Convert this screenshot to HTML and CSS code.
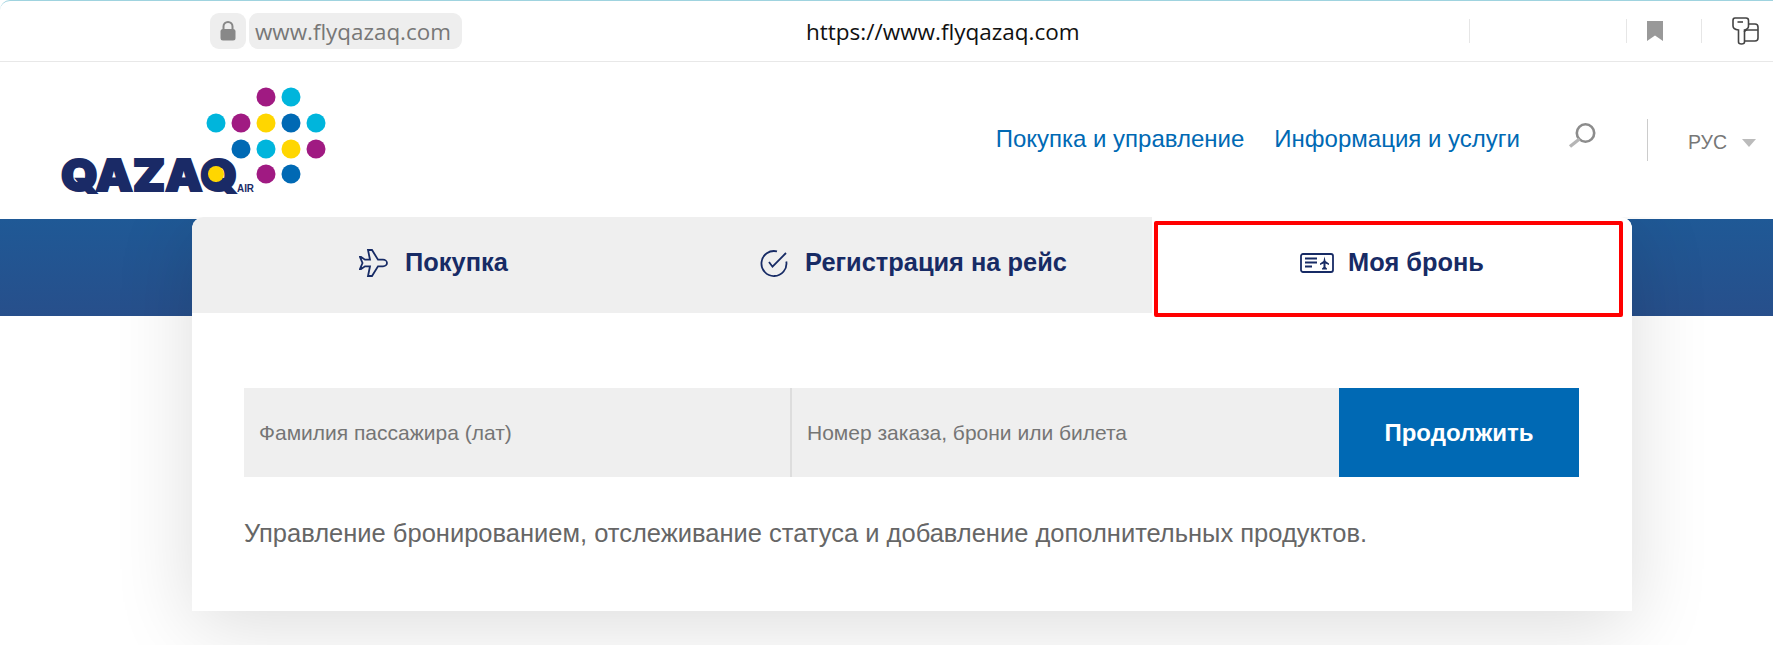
FILE: index.html
```html
<!DOCTYPE html>
<html lang="ru">
<head>
<meta charset="UTF-8">
<meta name="viewport" content="width=device-width, initial-scale=1.0">
<title>Qazaq Air</title>
<link rel="stylesheet" href="styles.css">
</head>
<body>
<div class="browser-bar">
  <div class="site-pill lock-pill">
    <svg class="lock-icon" width="16" height="20" viewBox="0 0 16 20">
      <path d="M3.5 9V5.5a4.5 4.5 0 0 1 9 0V9" fill="none" stroke="#888" stroke-width="2"/>
      <rect x="0.5" y="8" width="15" height="11.5" rx="2.5" fill="#888"/>
    </svg>
  </div>
  <div class="site-pill domain-pill">www.flyqazaq.com</div>
  <div class="address">https://www.flyqazaq.com</div>
  <div class="bar-tools">
    <span class="bar-sep bar-sep-first"></span>
    <span class="bar-sep"></span>
    <svg class="bookmark-icon" width="16" height="20" viewBox="0 0 16 20">
      <path d="M0 0H16V20L8 14.5L0 20Z" fill="#999"/>
    </svg>
    <span class="bar-sep"></span>
    <svg class="key-icon" width="27" height="28" viewBox="0 0 27 28" fill="none" stroke="#444" stroke-width="1.6">
      <path d="M3 1H14C15.5 1 16.5 2 16.5 3.5V9C16.5 11 15 12.5 12.5 13V25C12.5 26.5 11 27 9.5 27C7.5 27 6.5 26 6.5 25V13C3 12.5 1 11 1 9V3.5C1 2 1.8 1 3 1Z"/>
      <path d="M5.5 5H11"/>
      <path d="M16.5 7H23C25 7 26 8 26 10V21C26 23 25 24 23 24H12.5"/>
      <path d="M12.5 15C12.5 13.5 14 13 16 13H26"/>
    </svg>
  </div>
</div>

<header class="site-header">
  <svg class="logo" width="280" height="131" viewBox="0 0 280 131">
    <circle cx="216" cy="17" r="9.5" fill="#a01a82"/>
    <circle cx="241" cy="17" r="9.5" fill="#00b5dc"/>
    <circle cx="166" cy="43" r="9.5" fill="#00b5dc"/>
    <circle cx="191" cy="43" r="9.5" fill="#a01a82"/>
    <circle cx="216" cy="43" r="9.5" fill="#ffd600"/>
    <circle cx="241" cy="43" r="9.5" fill="#0069b4"/>
    <circle cx="266" cy="43" r="9.5" fill="#00b5dc"/>
    <circle cx="191" cy="69" r="9.5" fill="#0069b4"/>
    <circle cx="216" cy="69" r="9.5" fill="#00b5dc"/>
    <circle cx="241" cy="69" r="9.5" fill="#ffd600"/>
    <circle cx="266" cy="69" r="9.5" fill="#a01a82"/>
    <circle cx="216" cy="94" r="9.5" fill="#a01a82"/>
    <circle cx="241" cy="94" r="9.5" fill="#0069b4"/>
    <text class="logo-name" x="11" y="111" textLength="176" lengthAdjust="spacingAndGlyphs">QAZAQ</text>
    <circle cx="166" cy="94" r="8" fill="#ffd600"/>
    <text class="logo-air" x="187" y="112" textLength="17" lengthAdjust="spacingAndGlyphs">AIR</text>
  </svg>
  <nav class="main-nav">
    <a href="#">Покупка и управление</a>
    <a href="#">Информация и услуги</a>
  </nav>
  <svg class="search-icon" width="28" height="25" viewBox="0 0 28 25" fill="none" stroke="#8c8c8c">
    <circle cx="17.5" cy="10" r="8.7" stroke-width="2.6"/>
    <path d="M11.5 16L2 23.5" stroke-width="3.4" stroke="#b5b5b5"/>
  </svg>
  <span class="nav-sep"></span>
  <div class="lang">РУС<span class="lang-arrow"></span></div>
</header>

<main class="hero">
  <section class="card">
    <div class="tabs">
      <div class="tab">
        <svg width="29" height="28" viewBox="0 0 29 28" fill="none" stroke="#172b65" stroke-width="1.8">
          <path d="M28 14C28 12 26 10.7 24 10.7H19L13 1H9L11 10.7H6L2 8H1L3.5 14L1 20H2L6 17.3H11L9 27H13L19 17.3H24C26 17.3 28 16 28 14Z"/>
        </svg>
        <span>Покупка</span>
      </div>
      <div class="tab">
        <svg width="28" height="28" viewBox="0 0 28 28" fill="none" stroke="#172b65" stroke-width="1.8">
          <path d="M17 2.4A12.5 12.5 0 1 0 26.3 12.5"/>
          <path d="M9 13L12.5 17.7L26 4"/>
        </svg>
        <span>Регистрация на рейс</span>
      </div>
      <div class="tab tab-active">
        <svg width="34" height="20" viewBox="0 0 34 20" fill="none" stroke="#172b65" stroke-width="1.8">
          <rect x="1" y="1" width="32" height="18" rx="2"/>
          <path d="M5 5.5H17M5 9.5H17M5 13.5H12"/>
          <path d="M24.5 3.5L25.5 8L29 10.5V12L25.5 10.5V14L27 15.5V16.5H22V15.5L23.5 14V10.5L20 12V10.5L23.5 8Z" fill="#172b65" stroke="none"/>
        </svg>
        <span>Моя бронь</span>
        <div class="red-box"></div>
      </div>
    </div>
    <div class="card-body">
      <form class="search-form">
        <label class="field">Фамилия пассажира (лат)</label>
        <label class="field">Номер заказа, брони или билета</label>
        <button class="submit" type="button">Продолжить</button>
      </form>
      <p class="hint">Управление бронированием, отслеживание статуса и добавление дополнительных продуктов.</p>
    </div>
  </section>
</main>
</body>
</html>
```

FILE: styles.css
```css
html, body {
  margin: 0;
  height: 645px;
  overflow: hidden;
  background: #fff;
}
body {
  font-family: "Liberation Sans", Arial, sans-serif;
}
a {
  text-decoration: none;
}

/* browser chrome */
.browser-bar {
  height: 60px;
  display: flex;
  align-items: center;
  padding-left: 210px;
  border-top: 1px solid #9fd3df;
  border-bottom: 1px solid #e8e8e8;
  border-top-left-radius: 10px;
}
.site-pill {
  height: 36px;
  background: #eee;
  border-radius: 9px;
  display: flex;
  align-items: center;
  justify-content: center;
  font-family: "Open Sans", sans-serif;
}
.lock-pill {
  width: 36px;
}
.domain-pill {
  width: 213px;
  margin-left: 3px;
  padding-left: 6px;
  box-sizing: border-box;
  justify-content: flex-start;
  font-size: 22.4px;
  color: #777;
}
.address {
  margin-left: 344px;
  font-family: "Open Sans", sans-serif;
  font-size: 22.5px;
  color: #111;
}
.bar-tools {
  margin-left: auto;
  display: flex;
  align-items: center;
  padding-right: 14px;
}
.bar-sep {
  width: 1px;
  height: 24px;
  background: #e6e6e6;
  margin-left: 21px;
}
.bar-sep-first {
  margin-right: 135px;
}
.bookmark-icon {
  margin-left: 20px;
  margin-right: 17px;
}
.key-icon {
  margin-left: 30px;
}

/* site header */
.site-header {
  height: 155px;
  display: flex;
  align-items: center;
  padding-left: 50px;
  padding-right: 17px;
  background: #fff;
  position: relative;
  z-index: 1;
}
.logo {
  margin-right: auto;
  margin-bottom: -12px;
}
.logo-name {
  font-family: Inter, sans-serif;
  font-weight: 900;
  font-size: 44px;
  fill: #1a2a66;
  stroke: #1a2a66;
  stroke-width: 2px;
}
.logo-air {
  font-family: "Liberation Sans", sans-serif;
  font-weight: 700;
  font-size: 11px;
  fill: #1a2a66;
}
.main-nav {
  display: flex;
  gap: 30px;
  font-size: 24px;
  margin-top: -2px;
}
.main-nav a {
  color: #0069b4;
}
.search-icon {
  margin-left: 48px;
  margin-top: -8px;
}
.nav-sep {
  width: 1px;
  height: 42px;
  background: #ccc;
  margin-left: 51px;
}
.lang {
  margin-left: 40px;
  font-size: 19.5px;
  color: #777;
  display: flex;
  align-items: center;
  padding-top: 6px;
}
.lang-arrow {
  width: 0;
  height: 0;
  margin-left: 15px;
  border-left: 7.5px solid transparent;
  border-right: 7.5px solid transparent;
  border-top: 8px solid #bbb;
}

/* blue strip + card */
.hero {
  background-image: linear-gradient(#1f5996, #274f8b);
  background-repeat: no-repeat;
  background-position: 0 2px;
  background-size: 100% 97px;
  height: 428px;
  padding-left: 192px;
}
.card {
  width: 1440px;
  background: #fff;
  border-radius: 12px 12px 0 0;
  box-shadow: 0 14px 80px rgba(0, 0, 0, 0.14);
}
.tabs {
  display: grid;
  grid-template-columns: repeat(3, 1fr);
  height: 96px;
  background: #efefef;
  border-radius: 12px 12px 0 0;
}
.tab {
  display: flex;
  align-items: center;
  justify-content: center;
  gap: 17px;
  font-size: 25.4px;
  font-weight: 700;
  color: #172b65;
  position: relative;
  padding-left: 3px;
  padding-bottom: 5px;
  box-sizing: border-box;
}
.tab-active {
  gap: 14px;
  padding-left: 0;
  background: #fff;
  border-top-right-radius: 12px;
}
.red-box {
  position: absolute;
  left: 2px;
  top: 4px;
  width: 469px;
  height: 96px;
  box-sizing: border-box;
  border: 4px solid #f00;
  border-radius: 2px;
}
.card-body {
  padding: 75px 53px 64px 52px;
}
.search-form {
  display: flex;
  height: 89px;
}
.field {
  flex: 1;
  display: flex;
  align-items: center;
  background: #efefef;
  color: #757575;
  font-size: 21px;
  padding-left: 15px;
  box-sizing: border-box;
}
.field:first-child {
  flex: 0 0 548px;
  border-right: 2px solid #ddd;
}
.submit {
  width: 240px;
  border: 0;
  background: #0069b4;
  color: #fff;
  font-family: inherit;
  font-size: 24px;
  font-weight: 700;
}
.hint {
  margin: 42px 0 0;
  font-size: 25.5px;
  line-height: 28px;
  color: #666;
}
```
